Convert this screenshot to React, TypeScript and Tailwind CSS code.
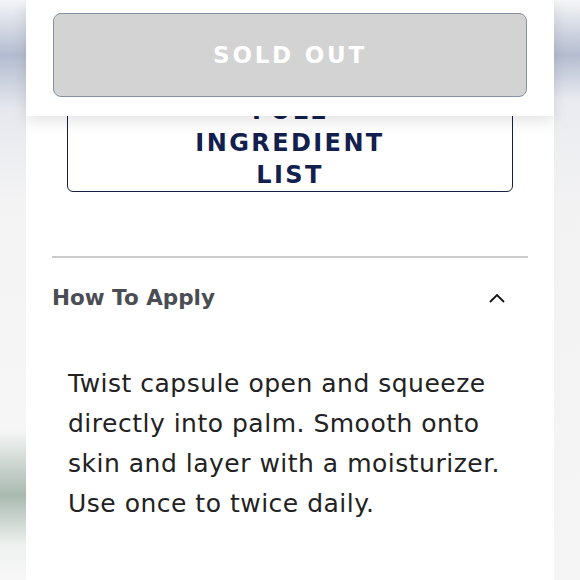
export default function App() {
  return (
    <div className="relative h-[580px] w-[580px] overflow-hidden bg-white font-['DejaVu_Sans',sans-serif]">
      <div className="flex h-full">
        {/* blurred page behind, left */}
        <div className="h-full w-[26px] shrink-0 bg-[linear-gradient(to_bottom,#f4f5f8_0px,#b3bccf_55px,#e6e8ee_110px,#f3f3f4_200px,#f6f6f6_430px,#a9b9b0_495px,#eef1ef_545px,#f7f7f7_580px)]" />

        {/* product panel */}
        <main className="flex h-full w-[528px] shrink-0 flex-col bg-white px-[26px]">
          <div className="mx-[15px] mt-[78px] rounded-[6px] border-[1.5px] border-[#15204a] px-4 pb-0 pt-[16px] text-center text-[24px] font-bold uppercase leading-[32px] tracking-[0.1em] text-[#13204e]">
            Full
            <br />
            Ingredient
            <br />
            List
          </div>

          <div className="mt-[64px] h-[2px] bg-[#cacaca]" />

          <button className="flex items-center justify-between pr-[22px] pt-[24px] text-left">
            <span className="text-[21.5px] font-bold text-[#4a4e54]">How To Apply</span>
            <svg width="18" height="12" viewBox="0 0 18 12" fill="none">
              <path d="M2 10L9 3L16 10" stroke="#111" strokeWidth="1.8" />
            </svg>
          </button>

          <p className="mt-[50px] pl-[16px] pr-[20px] text-[25px] leading-[40px] tracking-[0.02em] text-[#222]">
            Twist capsule open and squeeze directly into palm. Smooth onto skin and layer with a moisturizer. Use once to
            twice daily.
          </p>
        </main>

        {/* blurred page behind, right */}
        <div className="h-full flex-1 bg-[linear-gradient(to_bottom,#f5f6f8_0px,#b4bccf_55px,#e9ebf0_100px,#f2f2f3_200px,#f5f5f5_580px)]" />
      </div>

      {/* sticky add-to-cart bar */}
      <div className="absolute left-[26px] top-0 h-[116px] w-[528px] bg-white px-[27px] pt-[13px] shadow-[0_6px_14px_rgba(0,0,0,0.10)]">
        <button className="h-[84px] w-full rounded-[8px] border-[1.5px] border-[#8791a6] bg-[#d3d3d3] text-[23px] font-bold uppercase tracking-[0.12em] text-white">
          Sold Out
        </button>
      </div>
    </div>
  );
}
